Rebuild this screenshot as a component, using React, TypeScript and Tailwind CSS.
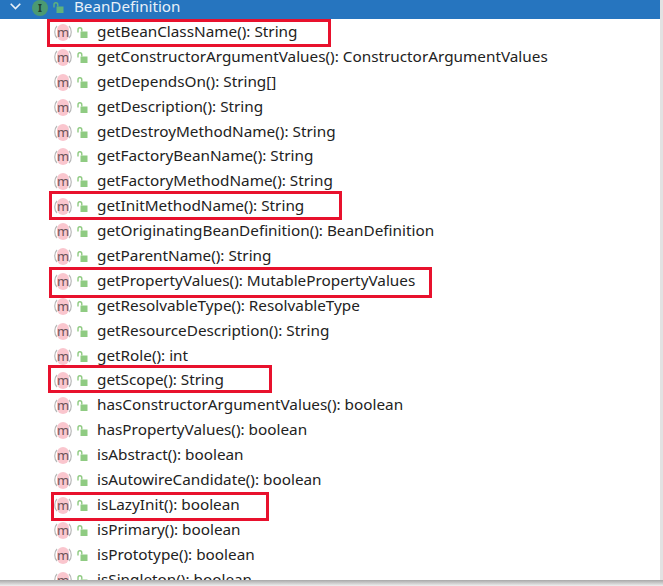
const rows: { text: string; box?: string }[] = [
  { text: "getBeanClassName(): String", box: "left-[47px] w-[284px] top-[0px] h-[28px]" },
  { text: "getConstructorArgumentValues(): ConstructorArgumentValues" },
  { text: "getDependsOn(): String[]" },
  { text: "getDescription(): String" },
  { text: "getDestroyMethodName(): String" },
  { text: "getFactoryBeanName(): String" },
  { text: "getFactoryMethodName(): String" },
  { text: "getInitMethodName(): String", box: "left-[49px] w-[293px] -top-[2px] h-[29px]" },
  { text: "getOriginatingBeanDefinition(): BeanDefinition" },
  { text: "getParentName(): String" },
  { text: "getPropertyValues(): MutablePropertyValues", box: "left-[49px] w-[383px] -top-[1px] h-[31px]" },
  { text: "getResolvableType(): ResolvableType" },
  { text: "getResourceDescription(): String" },
  { text: "getRole(): int" },
  { text: "getScope(): String", box: "left-[48px] w-[224px] -top-[2px] h-[28px]" },
  { text: "hasConstructorArgumentValues(): boolean" },
  { text: "hasPropertyValues(): boolean" },
  { text: "isAbstract(): boolean" },
  { text: "isAutowireCandidate(): boolean" },
  { text: "isLazyInit(): boolean", box: "left-[51px] w-[218px] top-[0px] h-[29px]" },
  { text: "isPrimary(): boolean" },
  { text: "isPrototype(): boolean" },
  { text: "isSingleton(): boolean" },
];

function MethodIcon() {
  return (
    <span className="relative flex h-[18px] w-[18px] translate-y-px items-center justify-center">
      <span className="absolute left-[3px] h-[17px] w-[12px] rounded-full bg-[#fac6ce]" />
      <svg className="absolute left-0 top-[1px]" width="18" height="16" viewBox="0 0 18 16" fill="none">
        <path d="M3 2C0 5 0 11 3 14M15 2c3 3 3 9 0 12" stroke="#b8b8b8" strokeWidth="1.2" />
      </svg>
      <span className="relative text-[13px] leading-none text-[#6a5357]">m</span>
    </span>
  );
}

function LockIcon({ color }: { color: string }) {
  return (
    <svg className="translate-y-px" width="11" height="11" viewBox="0 0 11 11" fill="none">
      <path d="M1 5.5V2.8C1 1.6 1.8.8 2.9.8S4.8 1.6 4.8 2.8V4.5" stroke={color} strokeWidth="1.4" />
      <rect x="3.5" y="4.5" width="7" height="6.5" fill={color} />
    </svg>
  );
}

export default function App() {
  return (
    <div className="h-[586px] w-[663px] overflow-hidden bg-white font-['Noto_Sans','Open_Sans',sans-serif]">
      <div className="h-[580px] w-[660px] overflow-hidden border-r-[3px] border-[#e2e2e2] box-content">
        <div className="flex h-[19px] items-center bg-[#2675bf] text-[15px] text-[#e8f0f8]">
          <svg className="ml-[10px] -translate-y-[3px]" width="11" height="7" viewBox="0 0 11 7" fill="none">
            <path d="M.7.7l4.8 4.8L10.3.7" stroke="#e8f0f8" strokeWidth="1.6" />
          </svg>
          <span className="ml-[11px] flex h-[16px] w-[16px] -translate-y-[2px] items-center justify-center rounded-full bg-[#4b9a72] text-[10px] font-bold leading-none text-[#1e3d30]">
            I
          </span>
          <span className="ml-[5px] -translate-y-[3px]">
            <LockIcon color="#5fb37c" />
          </span>
          <span className="ml-[10px] self-start text-[15.2px] leading-[13px]">BeanDefinition</span>
        </div>
        {rows.map((row) => (
          <div key={row.text} className="relative flex h-[24.9px] items-center pl-[54px] text-[15.3px] text-[#222222]">
            <MethodIcon />
            <span className="ml-[5px]">
              <LockIcon color="#8fcb82" />
            </span>
            <span className="ml-[9px] translate-y-[0.4px] whitespace-nowrap">{row.text}</span>
            {row.box && <div className={`absolute border-[3px] border-[#e8112d] ${row.box}`} />}
          </div>
        ))}
      </div>
      <div className="h-[6px] bg-gradient-to-b from-[#a8a8a8] to-[#f0f0f0]" />
    </div>
  );
}
